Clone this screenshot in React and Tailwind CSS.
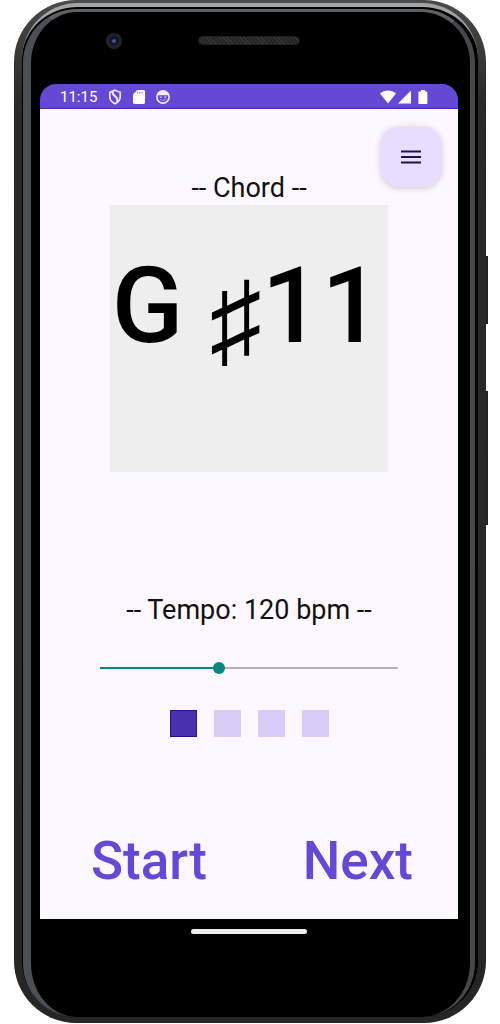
import { useState } from "react";

function ShieldIcon() {
  return (
    <svg viewBox="0 0 14 16" className="h-4 w-[14px]" fill="none" stroke="#f1ecff" strokeWidth="1.6" aria-hidden="true">
      <path d="M7 1.2 12.2 3.2V7.6C12.2 11 10 13.6 7 14.8 4 13.6 1.8 11 1.8 7.6V3.2Z" />
      <path d="M4.6 2.4C3.4 7.4 11 6.6 9.2 12.8" strokeWidth="2" />
    </svg>
  );
}

function CardIcon() {
  return (
    <svg viewBox="0 0 12 14" className="h-[14px] w-3" aria-hidden="true">
      <path d="M4.2 0H10.6C11.4 0 12 .6 12 1.4V12.6C12 13.4 11.4 14 10.6 14H1.4C.6 14 0 13.4 0 12.6V4.6Z" fill="#fff" />
      <path d="M4.5 1.8V3.6M6.7 1.8V3.6M8.9 1.8V3.6" stroke="#a08fe4" strokeWidth="1.3" />
    </svg>
  );
}

function FaceIcon() {
  return (
    <svg viewBox="0 0 14 14" className="size-[14px]" aria-hidden="true">
      <circle cx="7" cy="7" r="6.1" fill="none" stroke="#f1ecff" strokeWidth="1.6" />
      <path d="M1.4 5.6C2.4 2.4 4.4 1.2 7 1.2S11.6 2.4 12.6 5.6L10.8 5.2H3.2Z" fill="#f1ecff" />
      <path d="M3.4 6.4H6L5.6 8H4.2ZM8 6.4H10.6L9.8 8H8.4Z" fill="#c9bef4" />
      <path d="M3.8 9.4C5 10.4 9 10.4 10.2 9.4" fill="none" stroke="#a597ea" strokeWidth="1" />
    </svg>
  );
}

function StatusBar() {
  return (
    <div className="flex h-[25px] items-center justify-between rounded-t-[16px] border-b border-[#4a25c8] bg-[#6549d5] pt-[2px] pr-[30px] pl-5 text-white">
      <div className="flex items-center">
        <span className="mr-[11px] text-[15px] leading-5">11:15</span>
        <div className="flex items-center gap-[11px]">
          <ShieldIcon />
          <CardIcon />
          <FaceIcon />
        </div>
      </div>
      <div className="flex items-center">
        <svg viewBox="0 0 16 14" className="h-[14px] w-4" fill="#fff" aria-hidden="true">
          <path d="M8 13.6 0 3.6C4.4-.6 11.6-.6 16 3.6Z" />
        </svg>
        <svg viewBox="0 0 14 14" className="ml-[2px] h-[14px] w-[14px]" fill="#fff" aria-hidden="true">
          <path d="M13 .4V13.6H0Z" />
        </svg>
        <svg viewBox="0 0 10 14" className="ml-[6px] h-[14px] w-[10px]" fill="#fff" aria-hidden="true">
          <path d="M3 0H7V1.4H8.4C9 1.4 9.4 1.8 9.4 2.4V13C9.4 13.6 9 14 8.4 14H1.4C.8 14 .4 13.6 .4 13V2.4C.4 1.8 .8 1.4 1.4 1.4H3Z" />
        </svg>
      </div>
    </div>
  );
}

function TempoSlider({ value, onChange }) {
  const min = 40;
  const max = 240;
  const filled = ((value - min) / (max - min)) * 100;
  return (
    <input
      id="tempo"
      type="range"
      min={min}
      max={max}
      value={value}
      onChange={(e) => onChange(Number(e.target.value))}
      style={{ backgroundImage: `linear-gradient(to right, #04857f ${filled}%, #b6b1b9 ${filled}%)` }}
      className="mt-8 block h-5 w-[74%] cursor-pointer appearance-none bg-[length:calc(100%-12px)_2px] bg-center bg-no-repeat [&::-webkit-slider-thumb]:size-3 [&::-webkit-slider-thumb]:appearance-none [&::-webkit-slider-thumb]:rounded-full [&::-webkit-slider-thumb]:bg-[#048781]"
    />
  );
}

function ChordScreen() {
  const [tempo, setTempo] = useState(120);
  const beats = [true, false, false, false];
  return (
    <main className="relative flex flex-col items-center bg-[#fdf7ff] pt-[63px] pb-[26px] text-[#111]">
      <button
        type="button"
        aria-label="Menu"
        className="absolute top-[18px] right-[17px] flex size-[60px] items-center justify-center rounded-[18px] bg-[#e9ddff] shadow-[0_1px_7px_rgba(0,0,0,0.2)]"
      >
        <svg viewBox="0 0 20 14" className="h-[14px] w-5" stroke="#21104f" strokeWidth="2" aria-hidden="true">
          <path d="M0 1.5H20M0 7H20M0 12.5H20" />
        </svg>
      </button>

      <h1 className="text-[27px] leading-8 font-normal">-- Chord --</h1>
      <div className="mt-px h-[267px] w-2/3 bg-[#eeeeee] pt-10 pl-[2px] text-[105px] leading-[124px] font-medium whitespace-nowrap text-black">
        G <span className="align-[-14px] leading-none">♯</span>11
      </div>

      <label htmlFor="tempo" className="mt-[122px] text-[27px] leading-8 font-normal">
        -- Tempo: {tempo} bpm --
      </label>
      <TempoSlider value={tempo} onChange={setTempo} />

      <div className="mt-8 flex gap-[17px]">
        {beats.map((on, i) => (
          <span key={i} className={on ? "size-[27px] border border-[#2b0f9c] bg-[#4731ad]" : "size-[27px] bg-[#d9cdf8]"} />
        ))}
      </div>

      <div className="mt-[92px] flex w-full justify-between pr-[45px] pl-[51px] text-[53px] leading-[64px] font-medium text-[#6549d5]">
        <button type="button">Start</button>
        <button type="button">Next</button>
      </div>
    </main>
  );
}

export default function App() {
  return (
    <div className="min-h-screen bg-white px-[14px] font-[Roboto,'Noto_Sans',sans-serif]">
      <div className="relative rounded-[62px] bg-linear-to-b from-[#4a4b48] via-[#292929] via-10% to-[#262626] px-2 pt-[3px] pb-[6px]">
        <span className="absolute top-64 -right-[2px] h-[68px] w-[2px] bg-[#222]" />
        <span className="absolute top-[391px] -right-[2px] h-[134px] w-[2px] bg-[#222]" />
        <div className="rounded-[56px] border-t-4 border-[#a0a5a5] bg-black pt-[2px] pr-[3px] pl-px">
          <div className="rounded-[54px] border-t-[3px] border-r-[5px] border-l-8 border-t-[#5d6166] border-r-[#46464b] border-l-[#4b4f56] bg-black pr-3 pl-[9px]">
            <header className="flex h-[72px] items-start justify-center pt-[21px]">
              <div className="flex flex-1">
                <span className="ml-[66px] flex size-4 items-center justify-center rounded-full bg-[#222326]">
                  <span className="flex size-[10px] items-center justify-center rounded-full bg-[#12142a]">
                    <span className="size-1 rounded-full bg-[#44558f]" />
                  </span>
                </span>
              </div>
              <span className="mt-[3px] h-[9px] w-[102px] rounded-full border border-[#202121] bg-[repeating-linear-gradient(45deg,#343636_0_1px,#242525_1px_3px)]" />
              <div className="flex-1" />
            </header>
            <StatusBar />
            <ChordScreen />
            <footer className="flex h-[98px] justify-center pt-[10px]">
              <span className="h-[5px] w-[116px] rounded-full bg-[#eeeeee]" />
            </footer>
          </div>
        </div>
      </div>
    </div>
  );
}
